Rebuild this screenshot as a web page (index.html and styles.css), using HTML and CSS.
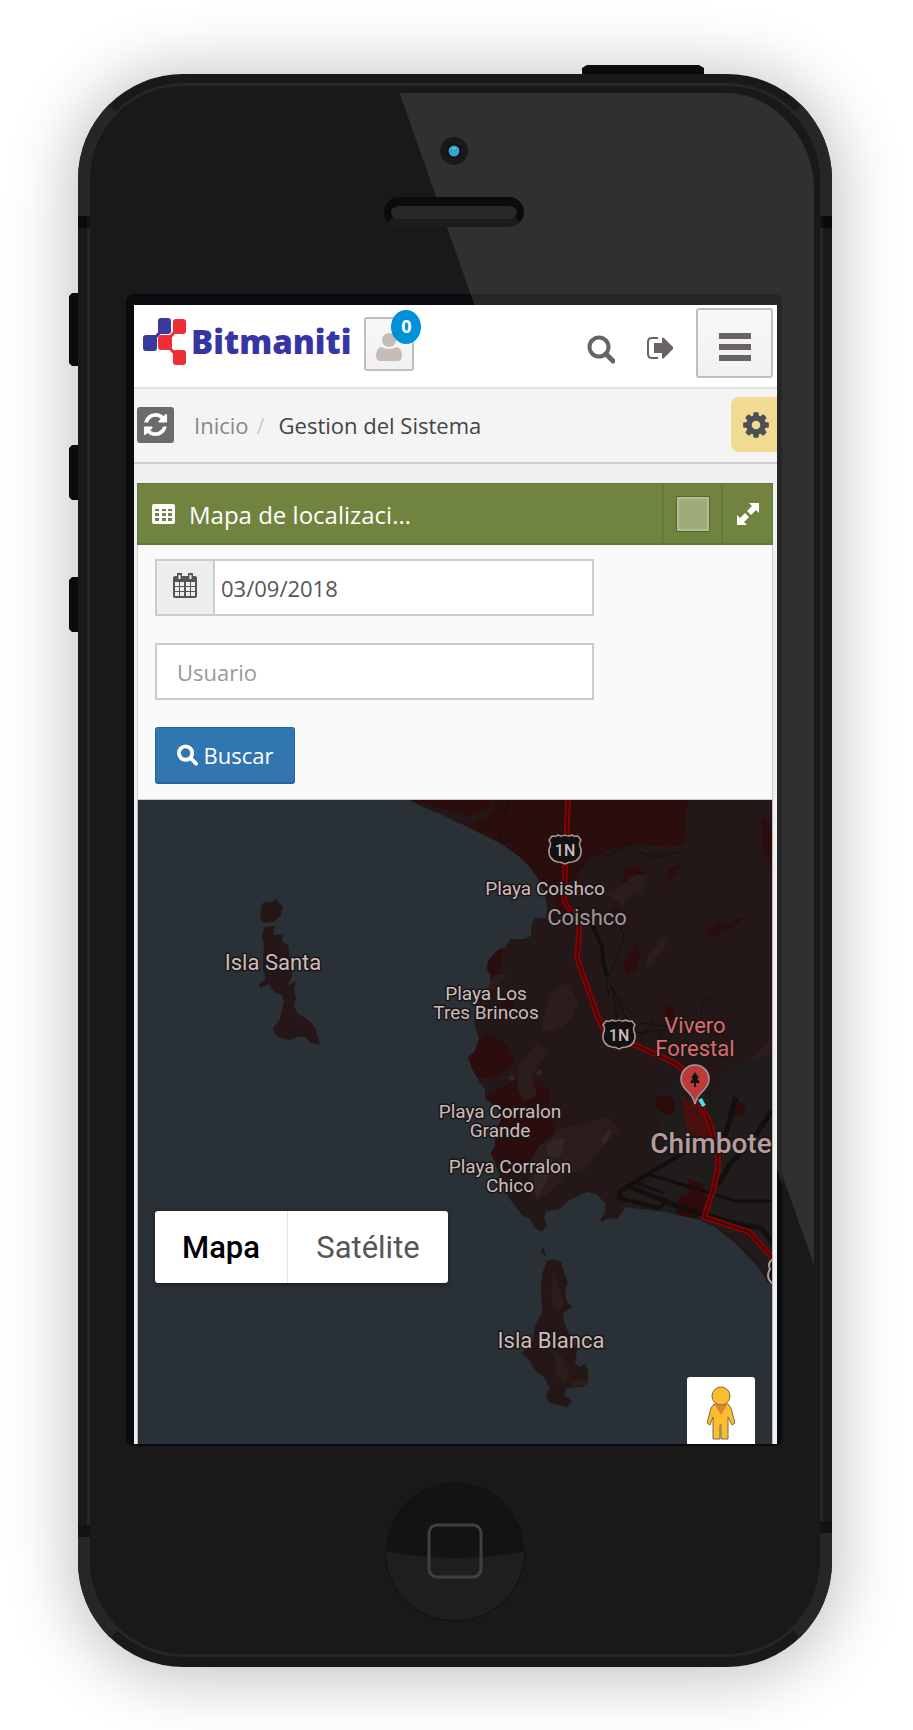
FILE: index.html
```html
<!DOCTYPE html>
<html lang="es">
<head>
<meta charset="utf-8">
<meta name="viewport" content="width=device-width, initial-scale=1">
<title>Bitmaniti - Gestion del Sistema</title>
<link rel="stylesheet" href="styles.css">
</head>
<body>
<div class="phone">
  <!-- Phone case -->
  <svg class="shell" viewBox="0 0 754 1593" preserveAspectRatio="none" aria-hidden="true">
    <defs><clipPath id="case"><rect width="754" height="1593" rx="105"/></clipPath></defs>
    <g fill="#0a0b0b">
      <path d="M504 0v-6l5-3h112l5 3v6z"/>
      <path d="M0 219h-6l-3 3v67l3 3h6zM0 371h-6l-3 3v49l3 3h6zM0 503h-6l-3 3v49l3 3h6z"/>
    </g>
    <g clip-path="url(#case)">
      <rect width="754" height="1593" fill="#191919"/>
      <g fill="#262626">
        <path d="M0 142V0l60 60v82zM754 142V0l-60 60v82zM0 1463v130l70-65v-65zM754 1459v134l-70-65v-69z"/>
      </g>
      <rect x="10.500" y="10.500" width="733" height="1571" rx="95" fill="#191919" stroke="#262626" stroke-width="3"/>
      <path fill="#0a0a0a" d="M0 142h9v12H0zM745 142h9v12h-9z"/>
      <path fill="#121212" d="M9 142h3v12H9zM742 142h3v12h-3zM0 1451h12v12H0zM742 1447h12v12h-12z"/>
    </g>
    <rect x="48" y="220" width="656" height="1152" rx="8" fill="#0a0b0f"/>
    <path fill="#303030" d="M321.500 19H648c50 0 88 48 88 96v1076z"/>
    <path fill="#262626" d="M393 220h303q8 0 8 8v882l-5-14V231H397z"/>
  </svg>

  <div class="phone-top" aria-hidden="true">
    <svg class="camera" viewBox="0 0 28 28"><circle cx="14" cy="14.500" r="14" fill="#3a3a3a"/><circle cx="14" cy="14" r="14" fill="#191919"/><circle cx="14" cy="14" r="7" fill="#0b0b0b"/><circle cx="14" cy="14" r="5.500" fill="#37a2cb"/><ellipse cx="14" cy="11.500" rx="2" ry="1" fill="#6cc4e2"/></svg>
    <div class="speaker"></div>
  </div>

  <div class="screen">
    <header class="topbar">
      <a class="brand" href="#">
        <svg class="brand-mark" viewBox="0 0 43 48" aria-hidden="true">
          <path d="M7 25L22 9" stroke="#3a3a9c" stroke-width="3"/>
          <path d="M22 25L36 9M22 25l14 15" stroke="#ee2d37" stroke-width="3"/>
          <rect x="15" y="0" width="13" height="16" rx="3" fill="#3a3a9c"/>
          <rect x="0" y="17" width="14" height="16" rx="3" fill="#3a3a9c"/>
          <rect x="30" y="1" width="13" height="15" rx="3" fill="#ee2d37"/>
          <rect x="15" y="17" width="14" height="15" rx="3" fill="#ee2d37"/>
          <rect x="30" y="32" width="13" height="15" rx="3" fill="#ee2d37"/>
        </svg>
        <span class="brand-name">Bitmaniti</span>
      </a>
      <button class="user" type="button" aria-label="Usuarios">
        <svg viewBox="0 0 26 30" aria-hidden="true" fill="#c5bbb7"><circle cx="13" cy="8" r="7"/><path d="M5 15q8 4 16 0 5 2 5 9 0 5-5 5H5q-5 0-5-5 0-7 5-9z"/></svg>
        <span class="badge">0</span>
      </button>
      <button class="plain search" type="button" aria-label="Buscar">
        <svg viewBox="0 0 28 29" aria-hidden="true" fill="none" stroke="#696363"><circle cx="12" cy="12" r="9.500" stroke-width="4"/><path d="M19 19l7 7" stroke-width="5" stroke-linecap="round"/></svg>
      </button>
      <button class="plain exit" type="button" aria-label="Salir">
        <svg viewBox="0 0 26 22" aria-hidden="true"><path d="M11 1H5Q1 1 1 5v12q0 4 4 4h6" fill="none" stroke="#696363" stroke-width="2"/><path d="M7 6h8V1q1-1 2 0l9 9q1 1 0 2l-9 9q-1 1-2 0v-5H7z" fill="#696363"/></svg>
      </button>
      <button class="menu" type="button" aria-label="Menú">
        <svg viewBox="0 0 32 28" aria-hidden="true" fill="#696363"><path d="M0 0h32v6H0zM0 11h32v6H0zM0 22h32v6H0z"/></svg>
      </button>
    </header>

    <nav class="ribbon" aria-label="Ruta">
      <button class="refresh" type="button" aria-label="Recargar">
        <svg viewBox="0 0 1792 1792" aria-hidden="true"><path fill="#fff" d="M1639 1056q0 5-1 7-64 268-268 434.500t-478 166.500q-146 0-282.500-55t-243.500-157l-129 129q-19 19-45 19t-45-19-19-45v-448q0-26 19-45t45-19h448q26 0 45 19t19 45-19 45l-137 137q71 66 161 102t187 36q134 0 250-65t186-179q11-17 53-117 8-23 30-23h192q13 0 22.500 9.500t9.500 22.500zm25-800v448q0 26-19 45t-45 19h-448q-26 0-45-19t-19-45 19-45l138-138q-148-137-349-137-134 0-250 65t-186 179q-11 17-53 117-8 23-30 23h-199q-13 0-22.500-9.500t-9.500-22.500v-7q65-268 270-434.500t480-166.500q146 0 284 55.500t245 156.500l130-129q19-19 45-19t45 19 19 45z"/></svg>
      </button>
      <ol class="crumbs"><li><a href="#">Inicio</a></li><li class="slash" aria-hidden="true">/</li><li>Gestion del Sistema</li></ol>
      <button class="settings" type="button" aria-label="Ajustes">
        <svg viewBox="0 0 1792 1792" aria-hidden="true"><path fill="#4c4f53" d="M1152 896q0-106-75-181t-181-75-181 75-75 181 75 181 181 75 181-75 75-181zm512-109v222q0 12-8 23t-20 13l-185 28q-19 54-39 91 35 50 107 138 10 12 10 25t-9 23q-27 37-99 108t-94 71q-12 0-26-9l-138-108q-44 23-91 38-16 136-29 186-7 28-36 28h-222q-14 0-24.500-8.500t-11.500-21.500l-28-184q-49-16-90-37l-141 107q-10 9-25 9-14 0-25-11-126-114-165-168-7-10-7-23 0-12 8-23 15-21 51-66.500t54-70.500q-27-50-41-99l-183-27q-13-2-21-12.500t-8-23.500v-222q0-12 8-23t19-13l186-28q14-46 39-92-40-57-107-138-10-12-10-24 0-10 9-23 26-36 98.500-107.500t94.500-71.500q13 0 26 10l138 107q44-23 91-38 16-136 29-186 7-28 36-28h222q14 0 24.500 8.500t11.500 21.500l28 184q49 16 90 37l142-107q9-9 24-9 13 0 25 10 129 119 165 170 7 8 7 22 0 12-8 23-15 21-51 66.500t-54 70.500q26 50 41 98l183 28q13 2 21 12.500t8 23.500z"/></svg>
      </button>
    </nav>

    <main class="content">
      <section class="widget">
        <header class="widget-head">
          <svg class="table-icon" viewBox="0 0 23 20" aria-hidden="true"><rect width="23" height="20" rx="2" fill="#fff"/><path fill="#71843f" d="M3 5h4v2H3zM10 5h4v2h-4zM16 5h4v2h-4zM3 9h4v3H3zM10 9h4v3h-4zM16 9h4v3h-4zM3 14h4v3H3zM10 14h4v3h-4zM16 14h4v3h-4z"/></svg>
          <h1>Mapa de localizaci...</h1>
          <button class="tool" type="button" aria-label="Color"><span class="swatch"></span></button>
          <button class="tool expand" type="button" aria-label="Pantalla completa">
            <svg viewBox="0 0 22 22" aria-hidden="true" fill="#fff"><path d="M12 0h10v10l-3-3-5 5-4-4 5-5zM10 22H0V12l3 3 5-5 4 4-5 5z"/></svg>
          </button>
        </header>
        <form class="filters">
          <label class="group">
            <span class="addon">
              <svg viewBox="0 0 24 25" role="img" aria-label="Fecha"><path fill="#555" d="M2 3h20q2 0 2 2v18q0 2-2 2H2q-2 0-2-2V5q0-2 2-2z"/><path fill="#eee" d="M2 9h4v4H2zM7 9h4v4H7zM13 9h4v4h-4zM18 9h4v4h-4zM2 14h4v4H2zM7 14h4v4H7zM13 14h4v4h-4zM18 14h4v4h-4zM2 19h4v4H2zM7 19h4v4H7zM13 19h4v4h-4zM18 19h4v4h-4z"/><path d="M6.500 1v5M17.500 1v5" stroke="#555" stroke-width="5" stroke-linecap="round"/><path d="M6.500 2v4M17.500 2v4" stroke="#eee" stroke-width="2"/></svg>
            </span>
            <input type="text" name="fecha" value="03/09/2018">
          </label>
          <input class="field" type="text" name="usuario" placeholder="Usuario" aria-label="Usuario">
          <button class="submit" type="button">
            <svg viewBox="0 0 22 22" aria-hidden="true" fill="none" stroke="#fff"><circle cx="9" cy="9" r="7" stroke-width="4"/><path d="M14 14l6 6" stroke-width="4" stroke-linecap="round"/></svg>
            Buscar
          </button>
        </form>

        <div class="map">
          <svg class="map-canvas" viewBox="138 799 634 644" preserveAspectRatio="xMidYMin slice" role="img" aria-label="Mapa de Chimbote">
            <defs>
              <g id="shield"><path d="M-13-14q4 1 6-1 4 2 7 0 3 2 7 0 2 2 6 1l3 4q-3 4 0 9 1 11-9 13-4 0-7 2-3-2-7-2-10-2-9-13 3-5 0-9z" fill="#111" stroke="#a99" stroke-width="1.500"/><text y="6" class="road">1N</text></g>
              <path id="land" d="M410 799L420 805 440 813 470 827 500 842 520 856 530 866 537 876 545 892 547 905 546 917 535 917 531 925 531 935 524 938 510 938 505 947 498 949 488 960 487 968 491 975 490 985 480 992 478 1005 474 1012 475 1025 479 1038 475 1050 468 1057 472 1067 480 1082 485 1088 485 1097 489 1100 501 1112 501 1120 496 1128 495 1145 491 1152 500 1175 509 1197 522 1214 530 1218 534 1226 541 1231 547 1225 544 1217 546 1210 560 1208 568 1200 578 1195 587 1191 596 1193 606 1203 605 1212 600 1219 602 1221 609 1217 617 1218 626 1206 665 1211 700 1219 715 1226 735 1242 758 1266 768 1282H773V799z"/>
              <clipPath id="coast"><use href="#land"/></clipPath>
            </defs>
            <rect x="138" y="799" width="634" height="644" fill="#293036"/>
            <use href="#land" fill="#231717"/>
            <g clip-path="url(#coast)">
              <g fill="#2b0d0e">
                <path d="M410 799h84l-4 8-20 8zM496 799h192l-3 25-1 20-14 2-34-3-20 4-28 12-12 18-20 10-19 8-9-14-14-12-12-18 9-9-24 5 3 14-20-14-8-16 30-20z"/>
                <path d="M625 868l12-4 8 8-17 18-6-4zM708 930l10-9 14 3 5-7h7l-14 11-10 2-4 6-8 1zM668 870l8-6 5 1-9 13-5 5zM635 940l-12 25 4 10 10-6 3-20zM762 815l10 10v40l-7-10-4-22zM610 909l10-4v5l-9 3z"/>
                <path d="M487 950l17-5-3 20-7 17-12 16 4-26zM500 1002l15-8-5 22-8-1zM466 1050l20-18 21 11 8 18-9 8-15 9-18-4zM487 1095l31-18 23 3 10 11-3 18 8 10-4 18-12 14-16 16-14 5-20-18z"/>
                <path d="M545 878l15-20 22 4-18 25 9 22-12 10zM770 1100l-6-12 8-6z"/>
              </g>
              <g fill="#2c1d1d">
                <path d="M600 893l20-8 15-11h14l-8 17-12 5-5 9-13-9zM648 955l15-20 4 8-18 24-3-5zM545 1010l9-22 15-6 9 20-7 17-16 12-14-2zM518 1065l20-24 11 10-17 23 5 21-14 5-6-16zM487 985l8-11 14-1-20 20zM747 1062l25-25v14l-20 17z"/>
                <path d="M527 1165l12-20 24-18 22-4 23-7 11 12-10 12-12 11-10 17-23 6-10 14-17 12-6-10z"/>
              </g>
              <g fill="#342525"><path d="M547 1142l18-6-2 14-4 7-12-2zM601 1140l8-12 2 4-7 12zM507 1077l5-4 4 4-4 3zM535 1073l5-5 3 4-5 2zM533 1176l20-20-4 18-12 24z"/></g>
              <path fill="#211c1c" d="M660 1090l32-12 18 20 24-34 38-12v232l-14-25-29-27-31-15-72-13-2-7 35-24z"/>
              <path fill="#4a1010" d="M681 1094l8 6 15-1 8 38-5 2-20-8z"/>
              <path fill="#2e0a0a" d="M656 1096l15-2 5 9-4 11-9-1-7-8zM736 1098l10 7-3 10-9-1zM665 1004l9 3v10l-6 6zM688 1178l15 5 1 10 8 10-15 14-20-11 2-10 10-3zM675 1205l18 4 1 9-17-4z"/>
            </g>
            <g fill="none" stroke="#120f0f">
              <path stroke-width="1" d="M502 799l-14 25 10 4 2 10 13 2 12-4q22-31 35-36M508 799l-3 16M540 820l7 14 10-10M626 799l6 8 5-3 4-5M574 871l17-18 9-2 8 5 21-14 12 10 15 4 23-5M610 923q14 0 14 16l-18 42 3 12-11 11M610 985l15 20 10 10M612 985l6 38M614 990l14 32M640 1022l27 3-10 13M636 1032l25-3M640 1040l14-22M701 1012l1-10 8-7 4 7"/>
              <path stroke-width="4" d="M590 920l12 25 1 16 4 14M690 1148l-70 42-1 7 40 10 7-6 35 12"/>
              <path stroke-width="5" d="M630 1186l55 22 48 14 28 5 14 17M736 1096l-12 43M772 1110l-22 32-20 21-12 21"/>
              <path stroke-width="3" d="M650 1174l54 16 30 10 38 0M634 1181l30 11"/>
            </g>
            <g fill="none" stroke-linejoin="round">
              <path stroke="#7b0506" stroke-width="6" d="M568 799l-4 96q0 8 8 16l6 10q2 4 1 12l-2 24 22 62 6 12 55 24 16 8 12 9 6 14M699 1100l11 22 8 32v14l-5 22-9 26 45 15 23 25"/>
              <path stroke="#3d0505" stroke-width="1.500" d="M568 799l-4 96q0 8 8 16l6 10q2 4 1 12l-2 24 22 62 6 12 55 24 16 8 12 9 6 14M699 1100l11 22 8 32v14l-5 22-9 26 45 15 23 25"/>
            </g>
            <g fill="#251718">
              <path d="M261 905l3-4 8 0 4-3 7 8-2 8-7 7-10 1-4-5zM264 926l11-1-2 9 10-1-1 8 6 3 2 17 2 12-2 7-3 5 9-5-2 9 2 8-2 8 4 8 9 5 8 8 5 17-9-1-6-6-8 0-7 3-9-2-6-4-2-6 7-9 2-10 2-7-2-7-8-3-5-8-9 4-1-4 7-5-3-9 0-11 1-14-2-8zM233 1028h1v2h-1z"/>
              <path d="M543 1245l3 10-5-3zM547 1260l6-2 8 3 4 13 3 8-3 7 1 10 6 7-9 6 2 12 4 8 8 17-2 14 5 3 5-3 3 6v12l-5 5-16 1-3 7 8 6-5 6-8-2-10-2-3-8 4-6-6-12-9-6-5-10-9-8 11-9 3-18 7-14-1-24 1-14z"/>
            </g>
            <path fill="#2c1d1d" d="M553 1270l7 17 4 15-5 10-6-6-2-14zM555 1350l8 8 7 18-6 8-8-10zM572 1380l16-2-2 6-16 2z"/>
            <use href="#shield" x="565" y="849"/>
            <use href="#shield" x="619" y="1034"/>
            <path d="M773 1258q-6 4-3 10-5 9 3 15" fill="#111" stroke="#a99" stroke-width="2"/>
            <path d="M700 1098l4 7" stroke="#3fe8f0" stroke-width="4"/>
            <path d="M695 1103q-2-8-8-13-6-6-6-12a14 14 0 0 1 28 0q0 6-6 12-6 5-8 13z" fill="#bd3a3b" stroke="#a99" stroke-width="1.500"/>
            <path d="M695 1071l4 6h-2l3 5h-4v4h-2v-4h-4l3-5h-2z" fill="#111"/>
            <g class="place">
              <g class="small"><text x="545" y="894">Playa Coishco</text><text x="486" y="999">Playa Los</text><text x="486" y="1018">Tres Brincos</text><text x="500" y="1117">Playa Corralon</text><text x="500" y="1136">Grande</text><text x="510" y="1172">Playa Corralon</text><text x="510" y="1191">Chico</text></g>
              <g class="mid"><text x="273" y="969">Isla Santa</text><text x="551" y="1347">Isla Blanca</text><text class="dim" x="587" y="924">Coishco</text></g>
              <g class="mid park"><text x="695" y="1032">Vivero</text><text x="695" y="1055">Forestal</text></g>
              <text class="city" x="711" y="1152">Chimbote</text>
            </g>
          </svg>
          <div class="map-type">
            <button class="active" type="button">Mapa</button>
            <button type="button">Satélite</button>
          </div>
          <button class="pegman" type="button" aria-label="Street View">
            <svg viewBox="0 0 28 54" aria-hidden="true"><g fill="#fcbd2d" stroke="#776a55" stroke-width="1"><path d="M7 18h14l3 4 4 15-3 2-4-8v22h-7V39h-1v14H6V31l-3 8-3-2 4-15z"/><circle cx="14" cy="10" r="9"/></g><path d="M8 19h12l-6 10z" fill="#e0862c"/></svg>
          </button>
        </div>
      </section>
    </main>
  </div>

  <div class="phone-bottom">
    <svg class="home" viewBox="0 0 142 142" aria-hidden="true"><circle cx="71" cy="71" r="70" fill="#1e1e1e" stroke="#101010"/><path d="M1 71a70 70 0 0 1 140 0q-70 14-140 0z" fill="#131313"/><path d="M1 71a70 70 0 0 1 140 0" fill="none" stroke="#202020"/><rect x="45" y="45" width="52" height="52" rx="8" fill="none" stroke="#404040" stroke-width="3"/></svg>
  </div>
</div>
</body>
</html>
```

FILE: styles.css
```css
* { box-sizing: border-box; }

body {
  margin: 0;
  padding: 74px 81px 63px 78px;
  background: #fff;
  font-family: "Open Sans", "Noto Sans", sans-serif;
  font-size: 22px;
  line-height: 30px;
  color: #444;
}

button, input { font: inherit; }
button { padding: 0; border: 0; background: none; cursor: pointer; }
svg { display: block; }
a { color: inherit; text-decoration: none; }

/* Phone case */
.phone {
  position: relative;
  border-radius: 105px;
  box-shadow: 0 4px 64px 8px rgba(0, 0, 0, .24);
}
.shell { position: absolute; inset: 0; width: 100%; height: 100%; overflow: visible; }
.phone-top {
  position: relative;
  height: 231px;
  padding: 63px 3px 0 0;
  display: flex;
  flex-direction: column;
  align-items: center;
  gap: 32px;
}
.camera { width: 28px; height: 28px; overflow: visible; }
.speaker {
  width: 140px;
  height: 30px;
  border: solid #0b0b0b;
  border-width: 9px 7px 8px;
  border-bottom-color: #1c1c1c;
  border-radius: 15px;
  background: #282828;
}
.phone-bottom {
  position: relative;
  height: 223px;
  padding-top: 36px;
  display: flex;
  justify-content: center;
}
.home { width: 142px; height: 142px; }

/* Screen */
.screen {
  position: relative;
  margin: 0 55px 0 56px;
  overflow: hidden;
  background: #f0f0f0;
}
.topbar {
  display: flex;
  align-items: flex-start;
  height: 84px;
  padding: 3px 4px 0 9px;
  background: #fff;
  border-bottom: 2px solid #e3e3e3;
}
.brand { display: flex; gap: 5px; padding-top: 10px; }
.brand-mark { width: 43px; height: 48px; }
.brand-name {
  font-size: 33px;
  font-weight: 800;
  line-height: 48px;
  color: #3735a3;
}
.user {
  position: relative;
  width: 50px;
  height: 54px;
  margin: 9px 0 0 13px;
  display: flex;
  justify-content: center;
  align-items: flex-end;
  padding-bottom: 7px;
}
.user, .menu {
  border: 2px solid #bfbfbf;
  border-radius: 3px;
  background: linear-gradient(#f8f8f8, #f1f1f1);
}
.user svg { width: 26px; height: 30px; }
.badge {
  position: absolute;
  top: -9px;
  right: -9px;
  width: 30px;
  height: 34px;
  border-radius: 50%;
  background: #0091d9;
  color: #fff;
  font-size: 18px;
  font-weight: 700;
  line-height: 33px;
}
.plain svg { width: 28px; }
.search { margin: 27px 0 0 auto; }
.exit { margin: 29px 23px 0 32px; }
.exit svg { width: 26px; }
.menu {
  width: 77px;
  height: 70px;
  display: grid;
  place-items: center;
  padding-top: 8px;
}
.menu svg { width: 32px; }

.ribbon {
  display: flex;
  align-items: center;
  height: 75px;
  padding: 0 0 2px 3px;
  background: #f4f4f4;
  border-bottom: 2px solid #cfcfcf;
}
.refresh {
  width: 37px;
  height: 36px;
  border-radius: 3px;
  background: #6b6b6b;
  display: grid;
  place-items: center;
}
.refresh svg { width: 27px; }
.crumbs {
  display: flex;
  margin: 0 auto 0 20px;
  padding: 0;
  list-style: none;
}
.crumbs a { color: #888; }
.slash { margin: 0 14px 0 8px; color: #ccc; }
.settings {
  width: 46px;
  height: 55px;
  border-radius: 8px 0 0 8px;
  background: #f1da91;
  display: grid;
  place-items: center;
  padding-left: 4px;
}
.settings svg { width: 30px; }

/* Widget */
.content { padding: 19px 4px 0 3px; }
.widget-head {
  display: flex;
  align-items: center;
  height: 62px;
  padding-left: 14px;
  border: 1px solid #64783a;
  border-bottom-width: 2px;
  background: #71843f;
  color: #fff;
}
.table-icon { width: 23px; height: 20px; }
.widget-head h1 {
  flex: 1;
  margin: 0 0 0 14px;
  padding-top: 3px;
  font-size: 24px;
  font-weight: 400;
  line-height: 32px;
}
.tool {
  width: 59px;
  height: 100%;
  border-left: 2px solid #66793a;
  display: grid;
  place-items: center;
}
.tool.expand { width: 51px; }
.expand svg { width: 22px; }
.swatch {
  width: 32px;
  height: 34px;
  border: 2px solid #b2be92;
  outline: 1px solid #56682e;
  background: #9eab7a;
}
.filters {
  display: flex;
  flex-direction: column;
  align-items: flex-start;
  gap: 27px;
  padding: 14px 16px 15px 17px;
  background: #fafafa;
  border: solid #ccc;
  border-width: 0 1px 1px;
}
.group { display: flex; }
.group, .field {
  width: 73%;
  height: 57px;
  border: 2px solid #ccc;
  background: #fff;
}
.addon {
  flex: none;
  width: 58px;
  background: #eee;
  border-right: 2px solid #ccc;
  display: grid;
  place-items: center;
  padding-bottom: 4px;
}
.addon svg { width: 24px; }
.group input {
  flex: 1;
  min-width: 0;
  border: 0;
  padding: 0 6px;
  background: none;
  color: #555;
}
.field { padding: 0 20px; color: #555; }
.field::placeholder { color: #999; opacity: 1; }
.submit {
  display: flex;
  align-items: center;
  justify-content: center;
  gap: 6px;
  width: 140px;
  height: 57px;
  border: 1px solid #2a6395;
  border-bottom-width: 2px;
  border-radius: 3px;
  background: #3276b1;
  color: #fff;
}
.submit svg { width: 21px; height: 22px; }

/* Map */
.map {
  position: relative;
  height: 644px;
  border: solid #bbb;
  border-width: 0 1px;
  overflow: hidden;
  font-family: Roboto, sans-serif;
}
.map-canvas { width: 100%; height: 100%; }
.place text {
  text-anchor: middle;
  fill: #d2b9b9;
  stroke: #171717;
  stroke-width: 3px;
  stroke-linejoin: round;
  paint-order: stroke;
}
.small { font-size: 19px; }
.mid { font-size: 22px; }
.place .dim { fill: #aa9494; }
.place .park text { fill: #dd6a6b; }
.place .city { font-size: 28px; font-weight: 500; fill: #b89c9c; }
.road { font-size: 16px; font-weight: 500; fill: #cbb; text-anchor: middle; }
.map-type {
  position: absolute;
  top: 411px;
  left: 17px;
  display: flex;
  height: 72px;
  border-radius: 3px;
  background: #fff;
  box-shadow: 0 1px 4px rgba(0, 0, 0, .5);
}
.map-type button { width: 160px; padding-top: 2px; font-size: 31px; color: #565656; }
.map-type .active {
  width: 133px;
  border-right: 1px solid #e3e3e3;
  color: #000;
  font-weight: 500;
}
.pegman {
  position: absolute;
  right: 17px;
  bottom: -4px;
  width: 68px;
  height: 71px;
  border-radius: 3px;
  background: #fff;
  display: grid;
  justify-items: center;
  padding-top: 9px;
}
.pegman svg { width: 28px; height: 54px; }
```
